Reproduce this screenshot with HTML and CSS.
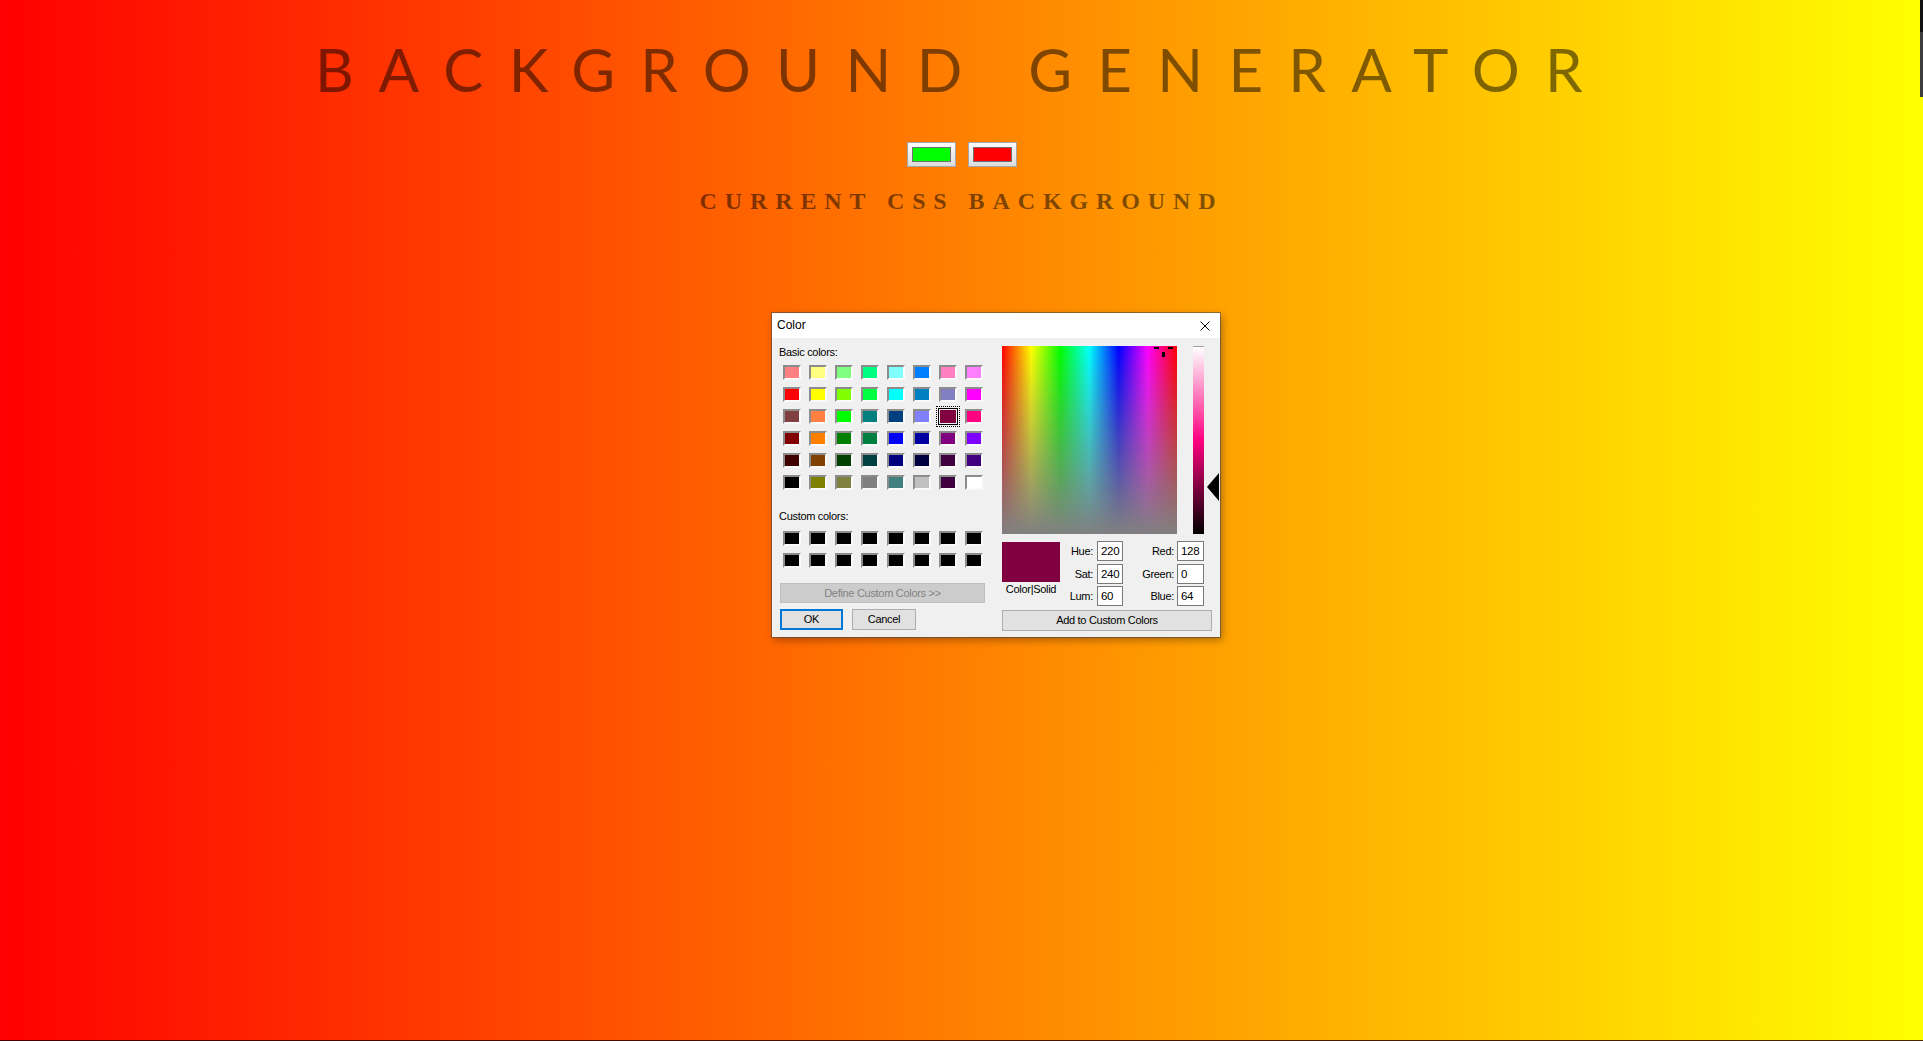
FILE: index.html
```html
<!DOCTYPE html>
<html lang="en">
<head>
<meta charset="utf-8">
<title>Background Generator</title>
<link rel="stylesheet" href="styles.css">
</head>
<body>
<div class="page">
  <h1 class="title">BACKGROUND GENERATOR</h1>
  <div class="pickers">
    <input type="color" class="picker" value="#00ff00">
    <input type="color" class="picker" value="#ff0000">
  </div>
  <h3 class="current">CURRENT CSS BACKGROUND</h3>
</div>

<div class="dialog">
  <div class="titlebar">
    <span>Color</span>
    <svg class="close" width="10" height="10" viewBox="0 0 10 10"><path d="M0.5 0.5 L9.5 9.5 M9.5 0.5 L0.5 9.5" stroke="#000" stroke-width="1" fill="none"/></svg>
  </div>
  <div class="dlg-body">
    <div class="left">
      <div class="label">Basic colors:</div>
      <div class="swatches">
        <span class="sw" style="background:#ff8080"></span><span class="sw" style="background:#ffff80"></span><span class="sw" style="background:#80ff80"></span><span class="sw" style="background:#00ff80"></span><span class="sw" style="background:#80ffff"></span><span class="sw" style="background:#0080ff"></span><span class="sw" style="background:#ff80c0"></span><span class="sw" style="background:#ff80ff"></span>
        <span class="sw" style="background:#ff0000"></span><span class="sw" style="background:#ffff00"></span><span class="sw" style="background:#80ff00"></span><span class="sw" style="background:#00ff40"></span><span class="sw" style="background:#00ffff"></span><span class="sw" style="background:#0080c0"></span><span class="sw" style="background:#8080c0"></span><span class="sw" style="background:#ff00ff"></span>
        <span class="sw" style="background:#804040"></span><span class="sw" style="background:#ff8040"></span><span class="sw" style="background:#00ff00"></span><span class="sw" style="background:#008080"></span><span class="sw" style="background:#004080"></span><span class="sw" style="background:#8080ff"></span><span class="sw sel" style="background:#800040"></span><span class="sw" style="background:#ff0080"></span>
        <span class="sw" style="background:#800000"></span><span class="sw" style="background:#ff8000"></span><span class="sw" style="background:#008000"></span><span class="sw" style="background:#008040"></span><span class="sw" style="background:#0000ff"></span><span class="sw" style="background:#0000a0"></span><span class="sw" style="background:#800080"></span><span class="sw" style="background:#8000ff"></span>
        <span class="sw" style="background:#400000"></span><span class="sw" style="background:#804000"></span><span class="sw" style="background:#004000"></span><span class="sw" style="background:#004040"></span><span class="sw" style="background:#000080"></span><span class="sw" style="background:#000040"></span><span class="sw" style="background:#400040"></span><span class="sw" style="background:#400080"></span>
        <span class="sw" style="background:#000000"></span><span class="sw" style="background:#808000"></span><span class="sw" style="background:#808040"></span><span class="sw" style="background:#808080"></span><span class="sw" style="background:#408080"></span><span class="sw" style="background:#c0c0c0"></span><span class="sw" style="background:#400040"></span><span class="sw" style="background:#ffffff"></span>
      </div>
      <div class="label custom-label">Custom colors:</div>
      <div class="swatches custom">
        <span class="sw black"></span><span class="sw black"></span><span class="sw black"></span><span class="sw black"></span><span class="sw black"></span><span class="sw black"></span><span class="sw black"></span><span class="sw black"></span>
        <span class="sw black"></span><span class="sw black"></span><span class="sw black"></span><span class="sw black"></span><span class="sw black"></span><span class="sw black"></span><span class="sw black"></span><span class="sw black"></span>
      </div>
      <div class="btn define">Define Custom Colors &gt;&gt;</div>
      <div class="actions">
        <div class="btn ok">OK</div>
        <div class="btn cancel">Cancel</div>
      </div>
    </div>
    <div class="right">
      <div class="picker-row">
        <div class="spectrum">
          <span class="cross ch-left"></span>
          <span class="cross ch-right"></span>
          <span class="cross ch-down"></span>
        </div>
        <div class="lum"></div>
        <div class="arrow"></div>
      </div>
      <div class="lower">
        <div class="preview-col">
          <div class="preview"></div>
          <div class="pv-label">Color|Solid</div>
        </div>
        <div class="fields">
          <span class="flabel">Hue:</span><span class="field">220</span><span class="flabel l2">Red:</span><span class="field">128</span>
          <span class="flabel">Sat:</span><span class="field">240</span><span class="flabel l2">Green:</span><span class="field">0</span>
          <span class="flabel">Lum:</span><span class="field">60</span><span class="flabel l2">Blue:</span><span class="field">64</span>
        </div>
      </div>
      <div class="btn add">Add to Custom Colors</div>
    </div>
  </div>
</div>

<div class="edge"></div>
<div class="baseline"></div>
</body>
</html>
```

FILE: styles.css
```css
html, body {
  margin: 0;
  padding: 0;
}
body {
  min-height: 100vh;
  background: linear-gradient(to right, #ff0000, #ffff00);
  font-family: "Lato", "Liberation Sans", sans-serif;
  overflow: hidden;
}

.page {
  display: flex;
  flex-direction: column;
  align-items: center;
  padding-top: 39px;
}

.title {
  margin: 0;
  font-family: "Lato", sans-serif;
  font-weight: 400;
  font-size: 60px;
  line-height: 60px;
  letter-spacing: 25.3px;
  color: rgba(0, 0, 0, 0.5);
  white-space: nowrap;
}

.pickers {
  display: flex;
  gap: 12px;
  margin-top: 43px;
}

.picker {
  -webkit-appearance: none;
  appearance: none;
  box-sizing: border-box;
  width: 49px;
  height: 25px;
  margin: 0;
  padding: 4px;
  border: 1px solid #a6a6a6;
  border-radius: 0;
  background: linear-gradient(#fcfcfc, #dcdcdc);
}
.picker::-webkit-color-swatch-wrapper {
  padding: 0;
}
.picker::-webkit-color-swatch {
  border: 1px solid #6f6f6f;
  border-radius: 0;
}

.current {
  margin: 22px 0 0;
  font-family: "Liberation Serif", serif;
  font-weight: 700;
  font-size: 24px;
  line-height: 24px;
  letter-spacing: 7.9px;
  color: rgba(0, 0, 0, 0.5);
}

/* ---------- Color dialog ---------- */
.dialog {
  position: absolute;
  left: 772px;
  top: 313px;
  width: 448px;
  height: 324px;
  display: flex;
  flex-direction: column;
  background: #f0f0f0;
  box-shadow: 0 0 0 1px rgba(70, 70, 70, 0.55), 2px 3px 8px rgba(0, 0, 0, 0.35);
  font-family: "Liberation Sans", Arial, sans-serif;
  font-size: 11px;
  line-height: 13px;
  letter-spacing: -0.3px;
  color: #000;
}

.titlebar {
  height: 25px;
  flex: none;
  display: flex;
  align-items: center;
  justify-content: space-between;
  padding: 0 10px 0 5px;
  background: #fff;
  font-size: 12px;
  letter-spacing: 0;
}
.close {
  display: block;
}

.dlg-body {
  flex: 1;
  display: flex;
  gap: 17px;
  padding: 8px 0 0 7px;
}

.left {
  width: 206px;
  display: flex;
  flex-direction: column;
}

.label {
  height: 13px;
}
.custom-label {
  margin-top: 20px;
}

.swatches {
  display: grid;
  grid-template-columns: repeat(8, 18px);
  grid-auto-rows: 15px;
  column-gap: 8px;
  row-gap: 7px;
  margin: 6px 0 0 4px;
}
.swatches.custom {
  margin-top: 8px;
}

.sw {
  box-sizing: border-box;
  border: 2px solid;
  border-color: #8c8c8c #fafafa #fafafa #8c8c8c;
}
.sw.black {
  background: #000;
}
.sw.sel {
  border: 1px solid #f0f0f0;
  box-shadow: 0 0 0 1px #000;
  outline: 1px dotted #000;
  outline-offset: 2px;
}

.btn {
  box-sizing: border-box;
  height: 21px;
  display: flex;
  align-items: center;
  justify-content: center;
  background: #e1e1e1;
  border: 1px solid #adadad;
}
.define {
  width: 205px;
  height: 20px;
  margin: 15px 0 0 1px;
  background: #cccccc;
  border-color: #bfbfbf;
  color: #838383;
}
.actions {
  display: flex;
  gap: 9px;
  margin: 6px 0 0 1px;
}
.ok {
  width: 63px;
  border: 2px solid #0078d7;
}
.cancel {
  width: 64px;
}

.right {
  width: 218px;
  display: flex;
  flex-direction: column;
}

.picker-row {
  display: flex;
  height: 188px;
}
.spectrum {
  position: relative;
  width: 175px;
  height: 188px;
  background:
    linear-gradient(to bottom, rgba(128, 128, 128, 0), #808080),
    linear-gradient(to right, #ff0000, #ffff00 16.67%, #00ff00 33.33%, #00ffff 50%, #0000ff 66.67%, #ff00ff 83.33%, #ff0000);
}
.cross {
  position: absolute;
  background: #000;
}
.ch-left {
  left: 152px;
  top: 1px;
  width: 5px;
  height: 2px;
}
.ch-right {
  left: 166px;
  top: 1px;
  width: 5px;
  height: 2px;
}
.ch-down {
  left: 160px;
  top: 6px;
  width: 3px;
  height: 5px;
}

.lum {
  width: 11px;
  margin-left: 16px;
  box-sizing: border-box;
  border-top: 1px solid #a0a0a0;
  background: linear-gradient(#ffffff, #ff0080 50%, #000000);
}
.arrow {
  width: 0;
  height: 0;
  margin: 127px 0 0 3px;
  border-right: 12px solid #000;
  border-top: 14px solid transparent;
  border-bottom: 14px solid transparent;
}

.lower {
  display: flex;
  margin-top: 7px;
}
.preview-col {
  width: 58px;
  display: flex;
  flex-direction: column;
  align-items: center;
}
.preview {
  width: 58px;
  height: 40px;
  margin-top: 1px;
  background: #800040;
}
.pv-label {
  margin-top: 1px;
  white-space: nowrap;
}

.fields {
  display: grid;
  grid-template-columns: 37px 26px 54px 27px;
  grid-auto-rows: 20px;
  row-gap: 2.5px;
}
.flabel {
  text-align: right;
  padding-right: 4px;
  line-height: 20px;
}
.flabel.l2 {
  padding-right: 3px;
}
.field {
  box-sizing: border-box;
  border: 1px solid #7a7a7a;
  background: #fff;
  padding-left: 3px;
  line-height: 18px;
  font-size: 11.5px;
}

.add {
  width: 210px;
  margin-top: 4px;
}

.edge {
  position: fixed;
  right: 0;
  top: 0;
  width: 3px;
  height: 97px;
  background: linear-gradient(#111111 0 32px, #3c3c3c 32px);
}
.baseline {
  position: fixed;
  left: 0;
  right: 0;
  bottom: 0;
  height: 1px;
  background: rgba(40, 0, 0, 0.85);
}
```
